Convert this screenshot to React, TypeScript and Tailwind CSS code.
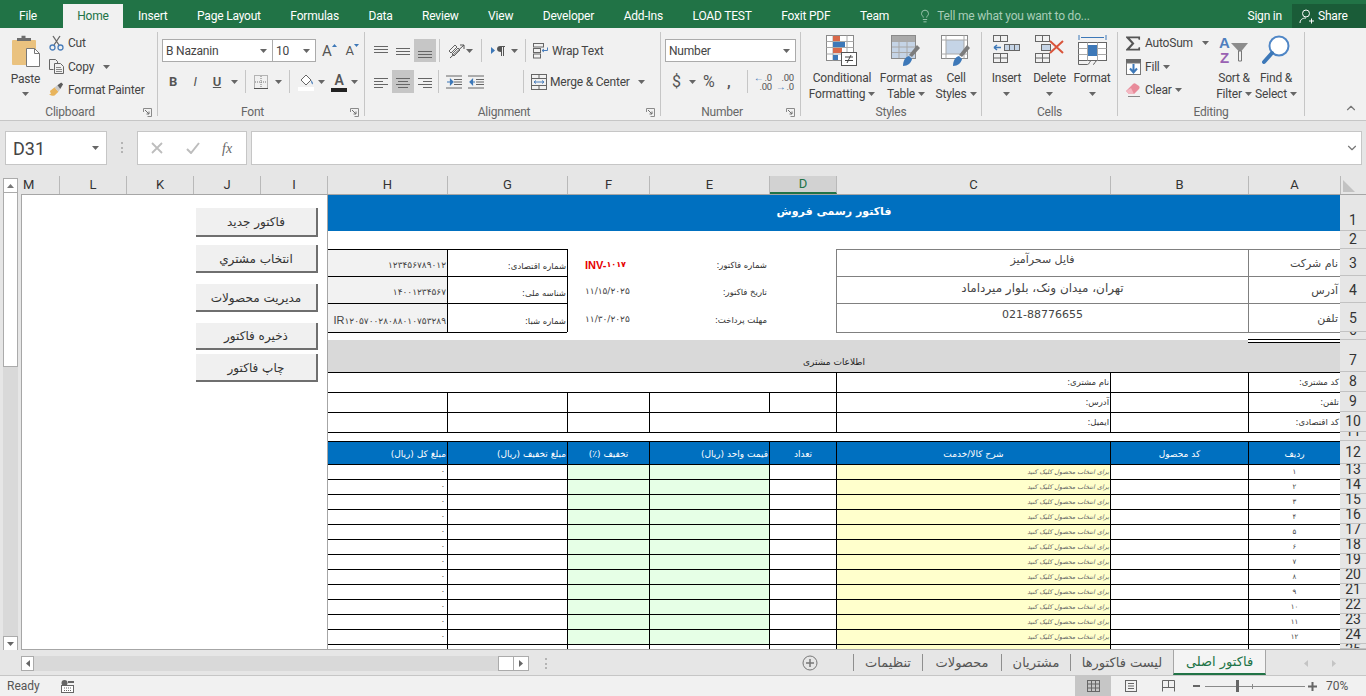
import type { ReactNode } from 'react'
import { ChevronDown, ChevronUp, Lightbulb } from 'lucide-react'

const ui = "font-['Roboto','Noto_Sans',sans-serif]"
const fa = "font-['DejaVu_Sans',sans-serif]"

function Caret({ className = '' }: { className?: string }) {
	return (
		<svg width="7" height="4" viewBox="0 0 7 4" className={`shrink-0 ${className}`}>
			<path d="M0 0h7L3.5 4z" fill="#666" />
		</svg>
	)
}

function Launcher() {
	return (
		<svg width="9" height="9" viewBox="0 0 9 9" className="mr-[5px] ml-[3px] shrink-0">
			<path d="M.5 4V.5H8.5V8.5H4.5" fill="none" stroke="#8a8a8a" />
			<path d="M2 2l4 4M6 3.5V6H3.5" fill="none" stroke="#6f6f6f" />
		</svg>
	)
}

function Sep({ h = 'h-[84px]' }: { h?: string }) {
	return <div className={`w-px shrink-0 bg-[#c6c6c6] ${h}`} />
}

function Group({ w, label, launcher, children }: { w: string; label: string; launcher?: boolean; children: ReactNode }) {
	return (
		<>
			<div className={`flex h-[88px] shrink-0 flex-col ${w}`}>
				<div className="h-[73px] overflow-hidden">{children}</div>
				<div className="flex h-[14px] items-center text-[12px] leading-[14px] text-[#666]">
					<span className="flex-1 text-center">{label}</span>
					{launcher && <Launcher />}
				</div>
			</div>
			<Sep />
		</>
	)
}

// paragraph-style icons drawn from short horizontal rules
function Rules({ rows, color = '#666' }: { rows: number[][]; color?: string }) {
	return (
		<svg width="16" height="16" viewBox="0 0 16 16" className="shrink-0">
			{rows.map(([x, y, w], i) => (
				<rect key={i} x={x} y={y} width={w} height="1" fill={color} />
			))}
		</svg>
	)
}

function IndentIcon({ back }: { back?: boolean }) {
	return (
		<svg width="16" height="16" viewBox="0 0 16 16" className="shrink-0">
			<path d="M0 2h16M8 5.500h8M8 8h8M8 10.500h8M0 14h16" stroke="#666" />
			<path d={back ? 'M7 8H2M2 8l2.500-2.500v5z' : 'M1 8h5M7 8L4.500 5.500v5z'} stroke="#3d78b8" strokeWidth="1.200" fill="#3d78b8" />
		</svg>
	)
}

function DirectionIcon() {
	return (
		<svg width="14" height="14" viewBox="0 0 14 14" className="shrink-0">
			<path d="M0 3l4 3.500L0 10z" fill="#3d78b8" />
			<path d="M9 2h5v1h-1v9h-1V3h-1v9h-1V8C7.500 8 6 7 6 5s1.500-3 3-3z" fill="#555" />
		</svg>
	)
}

function PasteIcon() {
	return (
		<svg width="30" height="32" viewBox="0 0 30 32">
			<rect x="1" y="5" width="24" height="25" rx="1" fill="#eac27f" />
			<path d="M6 6V3h4.500V.8h4V3H20v3z" fill="#6e6e6e" />
			<path d="M15.500 13.500h8l5 5v13h-13z" fill="#fff" stroke="#777" />
			<path d="M23.500 13.500v5h5" fill="none" stroke="#777" />
		</svg>
	)
}

function CutIcon() {
	return (
		<svg width="15" height="16" viewBox="0 0 15 16">
			<path d="M4 1l6 9M11 1L5 10" stroke="#666" strokeWidth="1.300" fill="none" />
			<circle cx="3.500" cy="12.500" r="2.500" fill="none" stroke="#4a7ebb" strokeWidth="1.300" />
			<circle cx="11.500" cy="12.500" r="2.500" fill="none" stroke="#4a7ebb" strokeWidth="1.300" />
		</svg>
	)
}

function CopyIcon() {
	return (
		<svg width="15" height="15" viewBox="0 0 15 15" fill="none" stroke="#666">
			<path d="M.5.5h6l2 2v2M.5.5v10h4" />
			<path d="M5.500 4.500h6l3 3v7h-9z" fill="#f1f1f1" />
			<path d="M7 8.500h5M7 10.500h6M7 12.500h6" stroke="#888" />
		</svg>
	)
}

function PainterIcon() {
	return (
		<svg width="16" height="15" viewBox="0 0 16 15">
			<path d="M1 9l5-4 4 5-4 4c-2 .5-4-.5-6-1l2-1z" fill="#e8b45c" />
			<path d="M6 5l3-2 3 4-2 3z" fill="#c9c9c9" />
			<path d="M9 3l4-3 2 2-3 5z" fill="#5b5b5b" />
		</svg>
	)
}

function BordersIcon() {
	return (
		<svg width="14" height="14" viewBox="0 0 14 14">
			<rect x=".5" y=".5" width="13" height="13" fill="none" stroke="#777" strokeDasharray="1 1" />
			<path d="M7 1v12M1 7h12" stroke="#777" strokeDasharray="1 1" />
			<path d="M0 13.500h14" stroke="#555" />
		</svg>
	)
}

function FillIcon() {
	return (
		<svg width="17" height="18" viewBox="0 0 17 18">
			<path d="M3 7l5-5 5 5-5 5z" fill="#fff" stroke="#666" />
			<path d="M13 7c1.500 1.500 2.500 3 1.500 4.500-1-.5-1.500-2.500-1.500-4.500z" fill="#4a7ebb" />
			<rect x="0" y="14" width="16" height="4" fill="#ffffff" />
		</svg>
	)
}

function OrientIcon() {
	return (
		<svg width="18" height="16" viewBox="0 0 18 16" fill="none">
			<path d="M2 8l6-6 2 2-6 6zM5 11l6-6 2 2-6 6z" stroke="#666" />
			<path d="M3 15L17 2M17 2h-4M17 2v4" stroke="#555" />
		</svg>
	)
}

function WrapIcon() {
	return (
		<svg width="17" height="16" viewBox="0 0 17 16" fill="none" stroke="#666">
			<rect x=".5" y=".5" width="10" height="3.500" />
			<rect x=".5" y="5.500" width="7" height="4" />
			<rect x=".5" y="11" width="7" height="4" />
			<path d="M9 7.500h5.500v-3M9 7.500l2-1.500M9 7.500l2 1.500" stroke="#4a7ebb" />
		</svg>
	)
}

function MergeIcon() {
	return (
		<svg width="16" height="16" viewBox="0 0 16 16" fill="none" stroke="#666">
			<rect x=".5" y=".5" width="15" height="15" />
			<path d="M.5 4.500h15M.5 11.500h15M8 .5v4M8 11.500v4" />
			<path d="M3 8h10M3 8l2-1.500M3 8l2 1.500M13 8l-2-1.500M13 8l-2 1.500" stroke="#4a7ebb" />
		</svg>
	)
}

function DecimalIcon({ more }: { more?: boolean }) {
	const top = more ? '.00' : '.0'
	const bottom = more ? '.0' : '.00'
	return (
		<div className="flex h-[22px] w-[17px] flex-col items-end justify-center text-[9.5px] leading-[9px] text-[#555]">
			<div className="flex items-center">
				{!more && <span className="mr-px text-[10px] leading-[9px] text-[#3d78b8]">←</span>}
				<span>{top}</span>
			</div>
			<div className="flex items-center">
				{more && <span className="mr-px text-[10px] leading-[9px] text-[#3d78b8]">→</span>}
				<span>{bottom}</span>
			</div>
		</div>
	)
}

function CondIcon() {
	return (
		<svg width="32" height="32" viewBox="0 0 32 32">
			<rect x=".5" y=".5" width="27" height="25" fill="#fff" stroke="#8a8a8a" />
			<path d="M7 .5v25M21 .5v25M.5 6.500h27M.5 12.500h27M.5 19h27" stroke="#a8a8a8" />
			<rect x="7" y="1" width="7" height="5" fill="#d9694a" />
			<rect x="7" y="7" width="12" height="5" fill="#3d78b8" />
			<rect x="7" y="13" width="9" height="5" fill="#d9694a" />
			<rect x="7" y="20" width="5" height="5" fill="#3d78b8" />
			<rect x="15.500" y="17.500" width="15" height="13" fill="#fff" stroke="#555" />
			<path d="M19 22h8M19 25.500h8M25 20l-4 8" stroke="#444" fill="none" />
		</svg>
	)
}

function TableIcon() {
	return (
		<svg width="30" height="32" viewBox="0 0 30 32">
			<rect x=".5" y=".5" width="24" height="23" fill="#fff" stroke="#8a8a8a" />
			<rect x="1" y="1" width="23" height="5" fill="#a9a9a9" />
			<rect x="1" y="6" width="23" height="17" fill="#c5d4e6" />
			<path d="M8 1v22M16 1v22M1 6.500h23M1 12h23M1 17.500h23" stroke="#a8a8a8" />
			<path d="M18 20l8-10 3 3-8 9z" fill="#7c7c7c" />
			<path d="M12 31c0-5 2-9 6-10l3 3c-1 4-4 7-9 7z" fill="#3d78b8" />
		</svg>
	)
}

function StylesIcon() {
	return (
		<svg width="30" height="32" viewBox="0 0 30 32">
			<rect x=".5" y=".5" width="26" height="23" fill="#fff" stroke="#8a8a8a" />
			<rect x="5" y="5" width="18" height="14" fill="#c5d4e6" />
			<path d="M5 .5v23M23 .5v23M.5 5h26M.5 19h26" stroke="#a8a8a8" />
			<path d="M18 20l8-10 3 3-8 9z" fill="#7c7c7c" />
			<path d="M12 31c0-5 2-9 6-10l3 3c-1 4-4 7-9 7z" fill="#3d78b8" />
		</svg>
	)
}

function InsertIcon() {
	return (
		<svg width="27" height="28" viewBox="0 0 27 28" fill="none" stroke="#666">
			<rect x=".5" y=".5" width="14" height="6" />
			<path d="M7.500.5v6" />
			<rect x="11.500" y="9.500" width="15" height="6" fill="#c5d4e6" />
			<path d="M16.500 9.500v6M21.500 9.500v6" />
			<path d="M1 12.500h7M1 12.500l3-2.500M1 12.500l3 2.500" stroke="#3d78b8" strokeWidth="1.500" />
			<rect x=".5" y="18.500" width="14" height="9" />
			<path d="M7.500 18.500v9M.5 23h14" />
		</svg>
	)
}

function DeleteIcon() {
	return (
		<svg width="30" height="28" viewBox="0 0 30 28" fill="none" stroke="#666">
			<rect x=".5" y=".5" width="14" height="6" />
			<path d="M7.500.5v6" />
			<rect x="6.500" y="9.500" width="9" height="6" fill="#c5d4e6" />
			<rect x=".5" y="18.500" width="14" height="9" />
			<path d="M7.500 18.500v9M.5 23h14" />
			<path d="M15 6l13 12M28 6L15 18" stroke="#d9543a" strokeWidth="2" />
		</svg>
	)
}

function FormatIcon() {
	return (
		<svg width="29" height="30" viewBox="0 0 29 30" fill="none" stroke="#666">
			<path d="M1 0v5M28 0v5M3 2.500h23" stroke="#3d78b8" />
			<rect x=".5" y="7.500" width="28" height="18" fill="#fff" />
			<path d="M9.500 7.500v18M19.500 7.500v18M.5 13.500h28M.5 19.500h28" stroke="#a8a8a8" />
			<rect x="10" y="10" width="9" height="11" fill="#3d78b8" stroke="none" />
			<path d="M.5 25.500v4h9c2 0 2-4 4-4M19 25.500c-2 0-2 4-4 4" />
		</svg>
	)
}

function SumIcon() {
	return (
		<svg width="16" height="15" viewBox="0 0 16 15">
			<path d="M0 0h15v3.500h-1.500L13 2H4l5 5.500L4 13h9l.5-1.500H15V15H0v-1l6-6.500L0 1z" fill="#555" />
		</svg>
	)
}

function FillDownIcon() {
	return (
		<svg width="15" height="16" viewBox="0 0 15 16">
			<rect x="0" y="0" width="15" height="4" fill="#6a6a6a" />
			<rect x=".5" y="4" width="14" height="11.500" fill="#fff" stroke="#777" />
			<path d="M7.500 5v8M4 9.500l3.500 4 3.500-4" fill="none" stroke="#3d78b8" strokeWidth="2" />
		</svg>
	)
}

function ClearIcon() {
	return (
		<svg width="15" height="14" viewBox="0 0 15 14">
			<path d="M0 8l7-7c1-1 2-1 3 0l3 2c.800 1 .800 2 0 3l-5 5H3z" fill="#e88b9a" />
			<path d="M0 8l3 3h5L5 5z" fill="#f3b7c1" />
			<path d="M2 13.500h12" stroke="#888" />
		</svg>
	)
}

function SortIcon() {
	return (
		<svg width="30" height="30" viewBox="0 0 30 30">
			<text x="0" y="13" fontSize="15" fontWeight="700" fill="#4f7fbe" fontFamily="Liberation Sans">A</text>
			<text x="1" y="28" fontSize="15" fontWeight="700" fill="#9a62b3" fontFamily="Liberation Sans">Z</text>
			<path d="M12 8h17l-6.500 8v10h-3V16z" fill="#8c8c8c" />
			<path d="M19.500 16h3v10h-3z" fill="#f1f1f1" stroke="#777" />
		</svg>
	)
}

function FindIcon() {
	return (
		<svg width="28" height="30" viewBox="0 0 28 30" fill="none">
			<circle cx="17" cy="11" r="9.500" stroke="#4f86c6" strokeWidth="2" fill="#fff" />
			<path d="M10 18L2 27" stroke="#3d78b8" strokeWidth="4" strokeLinecap="round" />
		</svg>
	)
}

function TinyRow({ icon, label, caret, gap = 'ml-[4px]', capGap = 'ml-[3px]', h = 'h-[23px]' }: { icon: ReactNode; label: string; caret?: boolean; gap?: string; capGap?: string; h?: string }) {
	return (
		<div className={`flex items-center ${h}`}>
			<div className="flex w-[15px] shrink-0 items-center justify-center">{icon}</div>
			<span className={`whitespace-nowrap text-[12px] leading-[16px] text-[#444] ${gap}`}>{label}</span>
			{caret && <Caret className={capGap} />}
		</div>
	)
}

function BigButton({ icon, lines, w, caretLine }: { icon: ReactNode; lines: string[]; w: string; caretLine?: boolean }) {
	return (
		<div className={`flex shrink-0 flex-col items-center ${w}`}>
			<div className="flex h-[34px] items-start justify-center">{icon}</div>
			<div className="mt-[1px] whitespace-nowrap text-center text-[12px] leading-[16px] text-[#444]">{lines[0]}</div>
			<div className="flex h-[16px] items-center justify-center whitespace-nowrap text-[12px] leading-[16px] text-[#444]">
				{lines[1] && <span>{lines[1]}</span>}
				{caretLine && <Caret className={lines[1] ? 'ml-[3px]' : ''} />}
			</div>
		</div>
	)
}

function Ribbon() {
	return (
		<div className={`flex h-[92px] shrink-0 items-start bg-[#f1f1f1] pt-[4px] tracking-[-0.2px] ${ui}`}>
			<Group w="w-[157px]" label="Clipboard" launcher>
				<div className="flex pl-[10px]">
					<div className="flex w-[31px] flex-col items-center pt-[3px]">
						<PasteIcon />
						<div className="mt-[4px] text-[12px] leading-[16px] text-[#444]">Paste</div>
						<Caret className="mt-[5px]" />
					</div>
					<div className="ml-[8px] flex flex-col">
						<TinyRow icon={<CutIcon />} label="Cut" h="h-[24px] mt-[-1px]" />
						<TinyRow icon={<CopyIcon />} label="Copy" caret capGap="ml-[9px]" />
						<TinyRow icon={<PainterIcon />} label="Format Painter" />
					</div>
				</div>
			</Group>

			<Group w="w-[206px]" label="Font" launcher>
				<div className="flex flex-col pl-[4px] pt-[7px]">
					<div className="flex h-[23px] items-center">
						<div className="flex h-[23px] w-[111px] items-center justify-between border border-[#ababab] bg-white pl-[3px] pr-[5px] text-[12px] text-[#444]">
							B Nazanin <Caret />
						</div>
						<div className="flex h-[23px] w-[43px] items-center justify-between border border-l-0 border-[#ababab] bg-white pl-[3px] pr-[5px] text-[12px] text-[#444]">
							10 <Caret />
						</div>
						<div className="ml-[6px] flex items-start text-[15px] leading-[20px] text-[#555]">
							A
							<svg width="5" height="3" viewBox="0 0 5 3" className="mt-[3px]">
								<path d="M0 3h5L2.500 0z" fill="#3d78b8" />
							</svg>
						</div>
						<div className="ml-[9px] flex items-start text-[13px] leading-[20px] text-[#555]">
							A
							<svg width="5" height="3" viewBox="0 0 5 3" className="mt-[3px]">
								<path d="M0 0h5L2.500 3z" fill="#3d78b8" />
							</svg>
						</div>
					</div>
					<div className="mt-[8px] flex h-[23px] items-center text-[13px] text-[#555]">
						<span className="w-[22px] text-center font-bold">B</span>
						<span className="w-[22px] text-center italic">I</span>
						<span className="w-[22px] text-center font-semibold underline">U</span>
						<Caret className="ml-[3px]" />
						<div className="ml-[7px] mr-[8px] h-[23px] w-px bg-[#c6c6c6]" />
						<BordersIcon />
						<Caret className="ml-[7px]" />
						<div className="ml-[7px] mr-[8px] h-[23px] w-px bg-[#c6c6c6]" />
						<FillIcon />
						<Caret className="ml-[3px]" />
						<div className="ml-[6px] flex h-[20px] w-[16px] flex-col items-center justify-end">
							<span className="text-[14px] font-semibold leading-[13px]">A</span>
							<div className="mt-px h-[4px] w-[16px] bg-[#222]" />
						</div>
						<Caret className="ml-[4px]" />
					</div>
				</div>
			</Group>

			<Group w="w-[295px]" label="Alignment" launcher>
				<div className="flex flex-col pl-[8px] pt-[7px]">
					<div className="flex h-[23px] items-center">
						<Rules rows={[[1, 3, 14], [1, 6, 14], [1, 9, 14]]} />
						<div className="w-[6px]" />
						<Rules rows={[[1, 5, 14], [1, 8, 14], [1, 11, 14]]} />
						<div className="ml-[3px] flex h-[23px] w-[22px] items-center justify-center bg-[#c6c6c6]">
							<Rules rows={[[1, 8, 14], [1, 11, 14], [1, 14, 14]]} />
						</div>
						<div className="ml-[3px] mr-[7px] h-[23px] w-px bg-[#c6c6c6]" />
						<OrientIcon />
						<Caret className="ml-[1px]" />
						<div className="ml-[8px] mr-[9px] h-[23px] w-px bg-[#c6c6c6]" />
						<DirectionIcon />
						<Caret className="ml-[6px]" />
						<div className="ml-[7px] mr-[7px] h-[23px] w-px bg-[#c6c6c6]" />
						<WrapIcon />
						<span className="ml-[2px] whitespace-nowrap text-[12px] text-[#444]">Wrap Text</span>
					</div>
					<div className="mt-[8px] flex h-[23px] items-center">
						<Rules rows={[[1, 4, 14], [1, 7, 9], [1, 10, 14], [1, 13, 9]]} />
						<div className="ml-[3px] flex h-[23px] w-[22px] items-center justify-center bg-[#c6c6c6]">
							<Rules rows={[[1, 4, 14], [3, 7, 10], [1, 10, 14], [3, 13, 10]]} />
						</div>
						<div className="w-[3px]" />
						<Rules rows={[[1, 4, 14], [6, 7, 9], [1, 10, 14], [6, 13, 9]]} />
						<div className="ml-[5px] mr-[7px] h-[23px] w-px bg-[#c6c6c6]" />
						<IndentIcon />
						<div className="w-[6px]" />
						<IndentIcon back />
						<div className="ml-[39px] mr-[7px] h-[23px] w-px bg-[#c6c6c6]" />
						<MergeIcon />
						<span className="ml-[3px] whitespace-nowrap text-[12px] text-[#444]">Merge &amp; Center</span>
						<Caret className="ml-[8px]" />
					</div>
				</div>
			</Group>

			<Group w="w-[139px]" label="Number" launcher>
				<div className="flex flex-col pl-[4px] pt-[7px]">
					<div className="flex h-[23px] w-[131px] items-center justify-between border border-[#ababab] bg-white pl-[3px] pr-[5px] text-[12px] text-[#444]">
						Number <Caret />
					</div>
					<div className="mt-[8px] flex h-[23px] items-center pl-[7px] text-[#555]">
						<span className="w-[9px] text-[16px] leading-[20px]">$</span>
						<Caret className="ml-[8px]" />
						<span className="ml-[7px] w-[14px] text-[16px] leading-[20px]">%</span>
						<span className="ml-[10px] w-[6px] text-[15px] font-bold leading-[20px]">,</span>
						<div className="ml-[14px] h-[23px] w-px bg-[#c6c6c6]" />
						<div className="ml-[7px]"><DecimalIcon /></div>
						<div className="ml-[5px]"><DecimalIcon more /></div>
					</div>
				</div>
			</Group>

			<Group w="w-[180px]" label="Styles">
				<div className="flex pl-[9px] pt-[3px]">
					<BigButton w="w-[64px]" icon={<CondIcon />} lines={['Conditional', 'Formatting']} caretLine />
					<BigButton w="w-[64px]" icon={<TableIcon />} lines={['Format as', 'Table']} caretLine />
					<BigButton w="w-[36px]" icon={<StylesIcon />} lines={['Cell', 'Styles']} caretLine />
				</div>
			</Group>

			<Group w="w-[135px]" label="Cells">
				<div className="flex pl-[3px] pt-[3px]">
					<BigButton w="w-[43px]" icon={<InsertIcon />} lines={['Insert']} caretLine />
					<BigButton w="w-[43px]" icon={<DeleteIcon />} lines={['Delete']} caretLine />
					<BigButton w="w-[42px]" icon={<FormatIcon />} lines={['Format']} caretLine />
				</div>
			</Group>

			<Group w="w-[186px]" label="Editing">
				<div className="flex pl-[8px]">
					<div className="flex w-[90px] flex-col">
						<TinyRow icon={<SumIcon />} label="AutoSum" caret capGap="ml-[9px]" h="h-[24px] mt-[-1px]" />
						<TinyRow icon={<FillDownIcon />} label="Fill" caret />
						<TinyRow icon={<ClearIcon />} label="Clear" caret />
					</div>
					<div className="ml-[-3px] pt-[3px]">
						<BigButton w="w-[42px]" icon={<SortIcon />} lines={['Sort &', 'Filter']} caretLine />
					</div>
					<div className="pt-[3px]">
						<BigButton w="w-[42px]" icon={<FindIcon />} lines={['Find &', 'Select']} caretLine />
					</div>
				</div>
			</Group>

			<div className="flex h-[84px] flex-1 items-end justify-end pb-[1px] pr-[8px]">
				<ChevronUp size={14} strokeWidth={2} className="text-[#777]" />
			</div>
		</div>
	)
}

const tabs = ['Insert', 'Page Layout', 'Formulas', 'Data', 'Review', 'View', 'Developer', 'Add-Ins', 'LOAD TEST', 'Foxit PDF', 'Team']

function TitleTabs() {
	return (
		<div className={`flex h-[28px] shrink-0 items-end bg-[#217346] text-[12px] tracking-[-0.2px] text-white ${ui}`}>
			<div className="ml-[19px] flex h-[24px] w-[19px] items-center">File</div>
			<div className="ml-[25px] flex h-[24px] w-[60px] items-center justify-center bg-[#f1f1f1] text-[#217346]">Home</div>
			<div className="ml-[15px] flex h-[24px] items-center gap-[29.5px]">
				{tabs.map((name) => (
					<span key={name} className="whitespace-nowrap">
						{name}
					</span>
				))}
			</div>
			<div className="ml-[29px] flex h-[24px] items-center text-[#a8cdb8]">
				<Lightbulb size={14} strokeWidth={1.5} />
				<span className="ml-[5px] whitespace-nowrap">Tell me what you want to do...</span>
			</div>
			<div className="flex-1" />
			<div className="flex h-[24px] items-center">Sign in</div>
			<div className="ml-[10px] flex h-[24px] w-[74px] items-center bg-[#1a5c38] pl-[7px]">
				<svg width="15" height="15" viewBox="0 0 15 15" fill="none" stroke="#fff">
					<circle cx="7" cy="4.500" r="3.500" />
					<path d="M1 14c0-3 2-5 6-5M10 12h5M12.500 9.500v5" />
				</svg>
				<span className="ml-[4px]">Share</span>
			</div>
		</div>
	)
}

function FormulaBar() {
	return (
		<div className={`flex h-[56px] shrink-0 items-start border-t border-[#c6c6c6] bg-[#e6e6e6] pt-[10px] ${ui}`}>
			<div className="ml-[5px] flex h-[34px] w-[102px] items-center justify-between border border-[#c6c6c6] bg-white pl-[7px] pr-[7px] text-[18px] text-[#444]">
				D31 <Caret />
			</div>
			<div className="mx-[14px] mt-[11px] flex h-[11px] w-[2px] flex-col justify-between">
				<div className="h-[2px] bg-[#b4b4b4]" />
				<div className="h-[2px] bg-[#b4b4b4]" />
				<div className="h-[2px] bg-[#b4b4b4]" />
			</div>
			<div className="flex h-[34px] w-[110px] items-center border border-[#c6c6c6] bg-white pl-[13px]">
				<svg width="12" height="12" viewBox="0 0 12 12" stroke="#bdbdbd" strokeWidth="1.800">
					<path d="M1 1l10 10M11 1L1 11" />
				</svg>
				<svg width="14" height="12" viewBox="0 0 14 12" stroke="#bdbdbd" strokeWidth="2" fill="none" className="ml-[23px]">
					<path d="M1 7l4 4 8-10" />
				</svg>
				<span className="ml-[22px] font-['Liberation_Serif',serif] text-[14px] italic text-[#666]">fx</span>
			</div>
			<div className="ml-[4px] flex h-[34px] w-[1111px] items-center justify-end border border-[#c6c6c6] bg-white pr-[2px]">
				<ChevronDown size={14} strokeWidth={2} className="text-[#777]" />
			</div>
		</div>
	)
}

const columns = [
	['M', 'w-[39px] justify-start pl-[2px]'],
	['L', 'w-[67px] justify-center'],
	['K', 'w-[67px] justify-center'],
	['J', 'w-[67px] justify-center'],
	['I', 'w-[67px] justify-center'],
	['H', 'w-[120px] justify-center'],
	['G', 'w-[120px] justify-center'],
	['F', 'w-[82px] justify-center'],
	['E', 'w-[120px] justify-center'],
	['D', 'w-[67px] justify-center border-b-2 border-b-[#217346] bg-[#d2d2d2] text-[#217346]'],
	['C', 'w-[274px] justify-center'],
	['B', 'w-[138px] justify-center'],
	['A', 'w-[92px] justify-center'],
]

function ColumnHeaders() {
	return (
		<div className={`flex h-[19px] shrink-0 border-b border-[#a6a6a6] bg-[#e6e6e6] text-[13px] leading-[18px] text-[#333] ${ui}`}>
			{columns.map(([name, cls]) => (
				<div key={name} className={`flex items-center border-r border-[#b9b9b9] ${cls}`}>
					{name}
				</div>
			))}
			<div className="flex flex-1 items-end pb-[2px] pl-[2px]">
				<svg width="12" height="12" viewBox="0 0 12 12">
					<path d="M0 0l12 12H0z" fill="#c2c2c2" />
				</svg>
			</div>
		</div>
	)
}

function RowHead({ n, cls = 'items-end pb-[3px]' }: { n: number; cls?: string }) {
	return (
		<div className={`flex justify-center overflow-hidden border-b border-[#c2c2c2] bg-[#e6e6e6] text-[14px] leading-[11px] text-[#333] ${cls} ${ui}`}>
			{n}
		</div>
	)
}

function PanelButton({ label, cls }: { label: string; cls: string }) {
	return (
		<div className={`flex w-[122px] items-center justify-center border-b-2 border-r-2 border-b-[#6f6f6f] border-r-[#6f6f6f] bg-[#f0f0f0] pt-[1px] text-[12px] text-[#333] ${fa} ${cls}`}>
			<Fa>{label}</Fa>
		</div>
	)
}

// Persian text inside the left-to-right grid
function Fa({ children }: { children: ReactNode }) {
	return <span dir="rtl">{children}</span>
}

const itemRows = ['۱', '۲', '۳', '۴', '۵', '۶', '۷', '۸', '۹', '۱۰', '۱۱', '۱۲']

const cellText = `overflow-hidden whitespace-nowrap text-[8.5px] text-[#333] ${fa}`

function InvoiceGrid() {
	return (
		<div dir="ltr" className="grid w-[1038px] grid-cols-[119px_120px_82px_120px_67px_274px_138px_92px_26px] grid-rows-[36px_18px_27px_27px_29px_8px_32px_20px_20px_20px_9px_23px_repeat(12,15px)_5px] bg-white">
			{/* row 1 */}
			<div className={`col-span-8 flex items-center justify-center bg-[#0070c0] pb-[1px] text-[11px] font-bold text-white ${fa}`}>
				<Fa>فاکتور رسمی فروش</Fa>
			</div>
			<RowHead n={1} cls="items-end pb-[4px]" />
			{/* row 2 */}
			<div className="col-span-8" />
			<RowHead n={2} cls="items-end pb-[3px]" />

			{/* rows 3-5 */}
			<InfoRow n={3} h="۱۲۳۴۵۶۷۸۹۰۱۲" g="شماره اقتصادی:" e="شماره فاکتور:" c="فایل سحرآمیز" a="نام شرکت" headCls="items-end pb-[6px]">
				<span className="font-['Liberation_Sans',sans-serif] text-[11px] font-bold text-[#e60000]">INV-</span>
				<span className="text-[8px] font-bold text-[#e60000]">۱۰۱۷</span>
			</InfoRow>
			<InfoRow n={4} h="۱۴۰۰۱۲۳۴۵۶۷" g="شناسه ملی:" e="تاریخ فاکتور:" c="تهران، میدان ونک، بلوار میرداماد" a="آدرس" cSize="text-[12px]" headCls="items-end pb-[6px]">
				<span className="text-[9px]">۱۱/۱۵/۲۰۲۵</span>
			</InfoRow>
			<InfoRow
				n={5}
				h={
					<>
						<span className="font-['Liberation_Sans',sans-serif] text-[11px]">IR</span>۱۲۰۵۷۰۰۲۸۰۸۸۰۱۰۷۵۳۲۸۹
					</>
				}
				g="شماره شبا:"
				e="مهلت پرداخت:"
				c="021-88776655"
				a="تلفن"
				headCls="items-end pb-[7px]"
			>
				<span className="text-[9px]">۱۱/۳۰/۲۰۲۵</span>
			</InfoRow>

			{/* row 6 */}
			<div className="col-span-2 border-t border-black" />
			<div className="col-span-3" />
			<div className="col-span-2 border-t border-[#808080]" />
			<div className="flex flex-col justify-end border-t border-[#808080]">
				<div className="h-px bg-black" />
			</div>
			<RowHead n={6} cls="items-end pb-[3px]" />

			{/* row 7 */}
			<div className="col-span-8 flex flex-col bg-[#d9d9d9]">
				<div className="h-[3px] w-[92px] self-end border-b border-t border-b-black border-t-white bg-white" />
				<div className={`flex flex-1 items-end justify-center pb-[3px] text-[9px] text-[#222] ${fa}`}>
					<Fa>اطلاعات مشتری</Fa>
				</div>
			</div>
			<RowHead n={7} cls="items-end pb-[5px]" />

			{/* rows 8-10 */}
			<div className="col-span-5 border-t border-black" />
			<InfoLabel text="نام مشتری:" />
			<div className="border-l border-t border-black" />
			<InfoLabel text="کد مشتری:" />
			<RowHead n={8} cls="items-end pb-[4px]" />

			<div className="border-t border-black" />
			<div className="border-l border-t border-black" />
			<div className="border-l border-t border-black" />
			<div className="border-l border-t border-black" />
			<div className="border-l border-t border-black" />
			<InfoLabel text="آدرس:" />
			<div className="border-l border-t border-black" />
			<InfoLabel text="تلفن:" />
			<RowHead n={9} cls="items-end pb-[4px]" />

			<div className="border-t border-black" />
			<div className="border-l border-t border-black" />
			<div className="border-l border-t border-black" />
			<div className="col-span-2 border-l border-t border-black" />
			<InfoLabel text="ایمیل:" />
			<div className="border-l border-t border-black" />
			<InfoLabel text="کد اقتصادی:" />
			<RowHead n={10} cls="items-end pb-[4px]" />

			{/* row 11 */}
			<div className="col-span-8 border-t border-black" />
			<RowHead n={11} cls="items-end pb-[3px]" />

			{/* row 12 */}
			<HeaderCell text="مبلغ کل (ریال)" right first />
			<HeaderCell text="مبلغ تخفیف (ریال)" right />
			<HeaderCell text="تخفیف (٪)" />
			<HeaderCell text="قیمت واحد (ریال)" right />
			<HeaderCell text="تعداد" />
			<HeaderCell text="شرح کالا/خدمت" />
			<HeaderCell text="کد محصول" />
			<HeaderCell text="ردیف" />
			<RowHead n={12} cls="items-end pb-[5px]" />

			{/* rows 13-24 */}
			{itemRows.map((digit, i) => (
				<div key={digit} className="contents">
					<div className={`flex items-center justify-end border-t border-black pr-[2px] text-[8px] text-[#444] ${fa}`}>۰</div>
					<div className="border-l border-t border-black" />
					<div className="border-l border-t border-black bg-[#e6ffe6]" />
					<div className="border-l border-t border-black bg-[#e6ffe6]" />
					<div className="border-l border-t border-black" />
					<div className={`flex items-center justify-end overflow-hidden whitespace-nowrap border-l border-t border-black bg-[#ffffcc] pr-[1px] pt-[1px] text-[6.4px] italic text-[#666] ${fa}`}>
						<Fa>برای انتخاب محصول کلیک کنید</Fa>
					</div>
					<div className="border-l border-t border-black" />
					<div className={`flex items-center justify-center border-l border-t border-black text-[7px] text-[#444] ${fa}`}>{digit}</div>
					<RowHead n={13 + i} />
				</div>
			))}

			{/* row 25, cut off by the sheet edge */}
			<div className="border-t border-black" />
			<div className="border-l border-t border-black" />
			<div className="border-l border-t border-black" />
			<div className="border-l border-t border-black" />
			<div className="border-l border-t border-black" />
			<div className="border-l border-t border-black bg-[#ffffcc]" />
			<div className="border-l border-t border-black" />
			<div className="border-l border-t border-black" />
			<RowHead n={25} cls="items-start" />
		</div>
	)
}

function InfoRow({ n, h, g, e, c, a, cSize = 'text-[11px]', headCls, children }: { n: number; h: ReactNode; g: string; e: string; c: string; a: string; cSize?: string; headCls: string; children: ReactNode }) {
	return (
		<>
			<div className={`flex items-center justify-end border-t border-black bg-[#f2f2f2] pr-px pt-[5px] text-[9px] text-[#444] ${fa}`}>
				<span className="whitespace-nowrap">{h}</span>
			</div>
			<div className={`flex items-center justify-end border-l border-t border-black pr-[1px] pt-[6px] ${cellText}`}>
				<Fa>{g}</Fa>
			</div>
			<div className={`flex items-center border-l border-black pl-[17px] pt-[5px] text-[#444] ${fa}`}>{children}</div>
			<div className={`flex items-center justify-end pr-[2px] pt-[6px] ${cellText}`}>
				<Fa>{e}</Fa>
			</div>
			<div />
			<div className={`col-span-2 flex items-start justify-center border-l border-t border-[#808080] text-[#444] ${cSize} ${fa} ${n === 5 ? 'pt-[3px]' : 'pt-[2px]'}`}>
				<Fa>{c}</Fa>
			</div>
			<div className={`flex items-center justify-end border-l border-t border-[#808080] pr-[2px] pt-[2px] text-[11px] text-[#444] ${fa}`}>
				<Fa>{a}</Fa>
			</div>
			<RowHead n={n} cls={headCls} />
		</>
	)
}

function InfoLabel({ text }: { text: string }) {
	return (
		<div className={`flex items-center justify-end border-l border-t border-black pr-[1px] ${cellText}`}>
			<Fa>{text}</Fa>
		</div>
	)
}

function HeaderCell({ text, right, first }: { text: string; right?: boolean; first?: boolean }) {
	return (
		<div className={`flex items-center overflow-hidden whitespace-nowrap border-t border-black bg-[#0070c0] pt-[3px] text-[9px] text-white ${fa} ${first ? '' : 'border-l'} ${right ? 'justify-end pr-[1px]' : 'justify-center'}`}>
			<Fa>{text}</Fa>
		</div>
	)
}

function SheetArea() {
	return (
		<div className="flex h-[474px] shrink-0 bg-[#e6e6e6]">
			{/* vertical scrollbar */}
			<div className="ml-[3px] mr-[3px] flex h-[475px] w-[15px] flex-col pt-[2px]">
				<div className="flex h-[15px] items-center justify-center border border-[#ababab] bg-white">
					<svg width="7" height="4" viewBox="0 0 7 4"><path d="M0 4h7L3.500 0z" fill="#777" /></svg>
				</div>
				<div className="h-[174px] border border-t-0 border-[#ababab] bg-white" />
				<div className="flex-1 bg-[#d9d9d9]" />
				<div className="flex h-[15px] items-center justify-center border border-[#ababab] bg-white">
					<Caret />
				</div>
			</div>
			<div className="flex w-[1345px] flex-col">
				<ColumnHeaders />
				<div className="flex h-[455px] overflow-hidden border-b border-[#a6a6a6]">
					<div className="flex w-[307px] shrink-0 flex-col items-end border-l border-r border-[#a6a6a6] bg-white pr-[9px]">
						<PanelButton label="فاکتور جدید" cls="mt-[13px] h-[29px]" />
						<PanelButton label="انتخاب مشتري" cls="mt-[8px] h-[28px]" />
						<PanelButton label="مدیریت محصولات" cls="mt-[11px] h-[28px]" />
						<PanelButton label="ذخیره فاکتور" cls="mt-[11px] h-[27px]" />
						<PanelButton label="چاپ فاکتور" cls="mt-[4px] h-[28px]" />
					</div>
					<InvoiceGrid />
				</div>
			</div>
		</div>
	)
}

const sheetTabs = [
	['تنظیمات', 'w-[69px]'],
	['محصولات', 'w-[79px]'],
	['مشتریان', 'w-[69px]'],
	['لیست فاکتورها', 'w-[103px]'],
]

function SheetTabs() {
	return (
		<div className={`flex h-[26px] shrink-0 items-start border-b border-[#c6c6c6] bg-[#e6e6e6] ${fa}`}>
			<div className="ml-[21px] mt-[6px] flex h-[15px] w-[508px] items-stretch bg-[#d9d9d9]">
				<div className="flex w-[13px] items-center justify-center border border-[#ababab] bg-white">
					<svg width="4" height="7" viewBox="0 0 4 7"><path d="M4 0v7L0 3.500z" fill="#666" /></svg>
				</div>
				<div className="flex-1" />
				<div className="w-[16px] border border-[#ababab] bg-white" />
				<div className="flex w-[15px] items-center justify-center border border-l-0 border-[#ababab] bg-white">
					<svg width="4" height="7" viewBox="0 0 4 7"><path d="M0 0v7l4-3.500z" fill="#666" /></svg>
				</div>
			</div>
			<div className="ml-[16px] mt-[8px] flex h-[11px] w-[2px] flex-col justify-between">
				<div className="h-[2px] bg-[#b4b4b4]" />
				<div className="h-[2px] bg-[#b4b4b4]" />
				<div className="h-[2px] bg-[#b4b4b4]" />
			</div>
			<svg width="16" height="16" viewBox="0 0 16 16" fill="none" stroke="#777" className="ml-[255px] mt-[5px]">
				<circle cx="8" cy="8" r="7" />
				<path d="M4 8h8M8 4v8" strokeWidth="1.500" />
			</svg>
			<div className="ml-[35px] flex h-[25px]">
				{sheetTabs.map(([name, w]) => (
					<div key={name} className={`mt-[4px] flex h-[17px] items-center justify-center border-l border-[#8f8f8f] text-[13px] text-[#555] ${w}`}>
						<Fa>{name}</Fa>
					</div>
				))}
				<div className="flex h-[25px] w-[93px] items-center justify-center border-b-2 border-l border-r border-b-[#217346] border-l-[#a6a6a6] border-r-[#a6a6a6] bg-[#f4f4f4] text-[13px] font-medium text-[#217346]">
					<Fa>فاکتور اصلی</Fa>
				</div>
			</div>
			<svg width="4" height="7" viewBox="0 0 4 7" className="ml-[38px] mt-[10px]"><path d="M4 0v7L0 3.500z" fill="#c4c4c4" /></svg>
			<svg width="4" height="7" viewBox="0 0 4 7" className="ml-[24px] mt-[10px]"><path d="M0 0v7l4-3.500z" fill="#c4c4c4" /></svg>
		</div>
	)
}

function StatusBar() {
	return (
		<div className={`flex h-[20px] shrink-0 items-center bg-[#f1f1f1] text-[12px] text-[#555] ${ui}`}>
			<span className="ml-[7px]">Ready</span>
			<svg width="13" height="13" viewBox="0 0 13 13" className="ml-[21px]">
				<circle cx="3.500" cy="3" r="3" fill="#666" />
				<rect x="7" y="1" width="6" height="2" fill="#666" />
				<rect x=".5" y="5.500" width="12" height="7" fill="#fff" stroke="#666" />
				<path d="M3 8h7M3 10.500h7" stroke="#666" strokeDasharray="1 1" />
			</svg>
			<div className="flex-1" />
			<div className="flex h-[20px] w-[36px] items-center justify-center bg-[#c6c6c6]">
				<svg width="13" height="12" viewBox="0 0 13 12" fill="none" stroke="#666">
					<rect x=".5" y=".5" width="12" height="11" />
					<path d="M4.500 .5v11M8.500 .5v11M.5 4h12M.5 8h12" />
				</svg>
			</div>
			<svg width="12" height="12" viewBox="0 0 12 12" fill="none" stroke="#666" className="ml-[14px]">
				<rect x=".5" y=".5" width="11" height="11" />
				<path d="M3 3.500h6M3 6h6M3 8.500h6" />
			</svg>
			<svg width="13" height="12" viewBox="0 0 13 12" fill="none" stroke="#666" className="ml-[25px]">
				<path d="M.5 11.500V.5h12v11M.5 7.500h12M6.500 .5v7" />
			</svg>
			<div className="ml-[18px] h-[2px] w-[7px] bg-[#666]" />
			<div className="ml-[5px] flex h-[12px] w-[100px] items-center">
				<div className="h-px w-[31px] bg-[#8a8a8a]" />
				<div className="h-[12px] w-[3px] bg-[#666]" />
				<div className="h-px w-[13px] bg-[#8a8a8a]" />
				<div className="h-[5px] w-px bg-[#8a8a8a]" />
				<div className="h-px flex-1 bg-[#8a8a8a]" />
			</div>
			<svg width="9" height="9" viewBox="0 0 9 9" className="ml-[3px]">
				<path d="M0 4.500h9M4.500 0v9" stroke="#666" strokeWidth="2" />
			</svg>
			<span className="ml-[9px] w-[26px] mr-[14px]">70%</span>
		</div>
	)
}

export default function App() {
	return (
		<div className="flex h-[696px] w-[1366px] flex-col overflow-hidden bg-[#e6e6e6]">
			<TitleTabs />
			<Ribbon />
			<FormulaBar />
			<SheetArea />
			<SheetTabs />
			<StatusBar />
		</div>
	)
}
